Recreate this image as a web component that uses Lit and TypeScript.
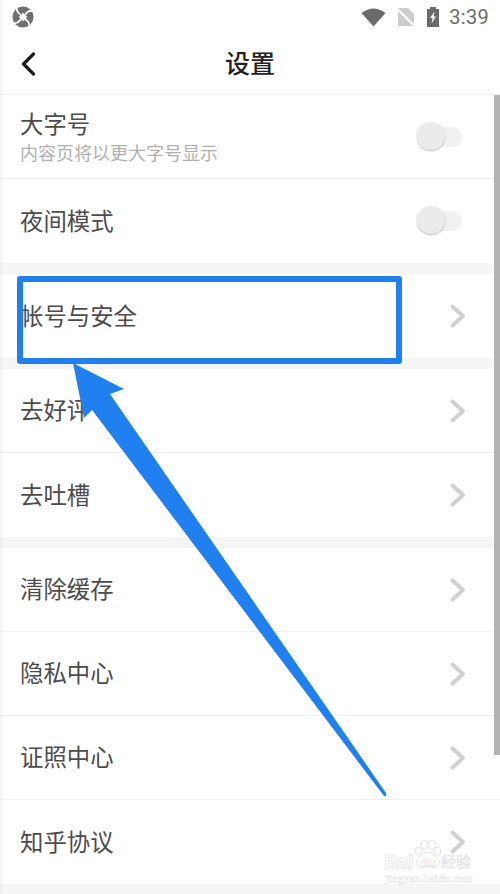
import { LitElement, html, css, svg } from 'lit';
import { customElement } from 'lit/decorators.js';

const chevron = html`<svg class="chev" width="16" height="24" viewBox="0 0 16 24">
  <path d="M2.5 2.5 L13 12 L2.5 21.5" fill="none" stroke="#d0d0d0" stroke-width="3.8" stroke-linecap="round" stroke-linejoin="round"/>
</svg>`;

const toggle = html`<div class="toggle"><span class="track"></span><span class="knob"></span></div>`;

// sections of the settings list, grey gap between each
const groups = [
  [
    { title: '大字号', sub: '内容页将以更大字号显示', toggle: true },
    { title: '夜间模式', toggle: true },
  ],
  [{ title: '帐号与安全' }],
  [{ title: '去好评' }, { title: '去吐槽' }],
  [{ title: '清除缓存' }, { title: '隐私中心' }, { title: '证照中心' }, { title: '知乎协议' }],
];

@customElement('app-root')
export class AppRoot extends LitElement {
  static styles = css`
    :host {
      display: block;
      position: relative;
      width: 500px;
      height: 894px;
      overflow: hidden;
      background: #f5f5f5;
      font-family: Roboto, "Noto Sans CJK SC", sans-serif;
    }
    .status {
      height: 34px;
      padding: 0 11px 0 12px;
      display: flex;
      align-items: center;
      background: #fff;
    }
    .status .spacer { flex: 1; }
    .status .icons { display: flex; align-items: center; }
    .wifi { margin-right: 10px; }
    .sim { margin-right: 10px; }
    .clock {
      font-size: 20px;
      color: #6b6b6b;
      margin-left: 9px;
      letter-spacing: 0.3px;
    }
    .bar {
      height: 60px;
      position: relative;
      display: flex;
      align-items: center;
      justify-content: center;
      background: #fff;
      border-bottom: 1px solid #f0f0f0;
    }
    .bar .back { position: absolute; left: 20px; top: 18px; }
    .bar h1 {
      margin: 0 0 4px;
      font-size: 25px;
      font-weight: 500;
      color: #222;
      font-family: "Noto Sans CJK SC", sans-serif;
    }
    .group {
      background: #fff;
      margin-bottom: 11px;
    }
    .row {
      height: 83px;
      padding: 0 37px 0 20px;
      display: flex;
      align-items: center;
      justify-content: space-between;
      border-bottom: 1px solid #efefef;
    }
    .row:last-child { border-bottom: none; height: 84px; }
    .text { margin-bottom: 3px; }
    .title {
      font-size: 23.4px;
      line-height: 32px;
      color: #4c4c4c;
      font-family: "Noto Sans CJK SC", sans-serif;
    }
    .sub {
      margin-top: 2px;
      font-size: 18px;
      line-height: 22px;
      color: #b0b0b0;
      font-family: "Noto Sans CJK SC", sans-serif;
    }
    .toggle {
      position: relative;
      width: 46px;
      height: 30px;
    }
    .track {
      position: absolute;
      left: 8px;
      top: 5px;
      width: 37px;
      height: 20px;
      border-radius: 10px;
      background: #f1f1f1;
    }
    .knob {
      position: absolute;
      left: 0;
      top: 0;
      width: 28px;
      height: 28px;
      border-radius: 50%;
      background: #ebebeb;
      box-shadow: 0 1px 2px rgba(0, 0, 0, 0.25);
    }
    .chev { margin-right: -3px; }
    .scrollbar {
      position: absolute;
      right: 0;
      top: 95px;
      width: 6px;
      height: 660px;
      background: #b4b4b4;
    }
    .edge {
      position: absolute;
      left: 0;
      top: 0;
      width: 4px;
      height: 100%;
      background: linear-gradient(to right, rgba(0, 0, 0, 0.04), transparent);
    }
    .callout {
      position: absolute;
      left: 17px;
      top: 276px;
      width: 385px;
      height: 88px;
      box-sizing: border-box;
      border: 6px solid #2080ef;
      border-radius: 3px;
    }
    .arrow { position: absolute; left: 0; top: 0; }
    .mark {
      position: absolute;
      left: 384px;
      top: 838px;
      width: 116px;
      height: 46px;
      color: #fff;
      font-family: "Liberation Sans", "Noto Sans CJK SC", sans-serif;
      -webkit-text-stroke: 0.6px #dedede;
    }
    .mark svg { position: absolute; left: 29px; top: 0; }
    .mark span, .mark div { position: absolute; white-space: nowrap; }
    .bai { left: 0; top: 14px; font-size: 20px; line-height: 20px; letter-spacing: -0.8px; font-weight: 700; }
    .du { left: 36px; top: 18px; font-size: 13px; line-height: 14px; font-weight: 700; }
    .cn { left: 57px; top: 15px; font-size: 15px; line-height: 18px; }
    .url {
      left: 1px;
      top: 34px;
      font-size: 11px;
      line-height: 12px;
      font-weight: 700;
      font-family: "Liberation Serif", serif;
      -webkit-text-stroke: 0.4px #dedede;
    }
  `;

  render() {
    return html`
      <div class="status">
        <svg width="22" height="22" viewBox="0 0 22 22">
          <circle cx="11" cy="11" r="10.5" fill="#6f6f6f"/>
          <g fill="none" stroke="#fff" stroke-width="1.8" stroke-linecap="round">
            <path d="M8.5 8.5 Q5 7 4.5 1.5"/>
            <path d="M13.5 8.5 Q15 5 20.5 4.5"/>
            <path d="M13.5 13.5 Q17 15 17.5 20.5"/>
            <path d="M8.5 13.5 Q7 17 1.5 17.5"/>
          </g>
          <rect x="8" y="8" width="6" height="6" transform="rotate(45 11 11)" fill="#fff"/>
        </svg>
        <span class="spacer"></span>
        <div class="icons">
          <svg class="wifi" width="25" height="20" viewBox="0 0 25 20">
            <path d="M0.5 6 Q12.5 -3 24.5 6 L12.5 19.5Z" fill="#6b6b6b"/>
          </svg>
          <svg class="sim" width="20" height="20" viewBox="0 0 20 20">
            <path d="M2 1 H12 L18 7 V19 H2Z" fill="#cdcdcd"/>
            <path d="M0.5 1 L19.5 20" stroke="#fff" stroke-width="2"/>
          </svg>
          <svg width="14" height="20" viewBox="0 0 14 20">
            <path d="M4 0 H10 V2 H13 V20 H1 V2 H4Z" fill="#6b6b6b"/>
            <path d="M8.5 4.5 L4 11 H6.5 L5.5 16.5 L10 9.5 H7.5Z" fill="#fff"/>
          </svg>
          <span class="clock">3:39</span>
        </div>
      </div>
      <div class="bar">
        <svg class="back" width="18" height="24" viewBox="0 0 18 24">
          <path d="M13.5 2 L3.5 12 L13.5 22" fill="none" stroke="#1c1c1c" stroke-width="3.2" stroke-linecap="round" stroke-linejoin="round"/>
        </svg>
        <h1>设置</h1>
      </div>
      ${groups.map(
        items => html`
          <div class="group">
            ${items.map(
              item => html`
                <div class="row">
                  <div class="text">
                    <div class="title">${item.title}</div>
                    ${item.sub ? html`<div class="sub">${item.sub}</div>` : ''}
                  </div>
                  ${item.toggle ? toggle : chevron}
                </div>
              `,
            )}
          </div>
        `,
      )}
      <div class="scrollbar"></div>
      <div class="edge"></div>
      <div class="callout"></div>
      <svg class="arrow" width="500" height="894" viewBox="0 0 500 894">
        ${svg`<path d="M73 363 L124 389 L110 394 L386 793 Q387 797 384 796 L92 410 L84 418Z" fill="#2080ef"/>`}
      </svg>
      <div class="mark">
        <svg width="30" height="32" viewBox="0 0 32 32">
          <g fill="#fff" stroke="#dedede" stroke-width="1">
            <ellipse cx="6" cy="13" rx="3.4" ry="4.4"/>
            <ellipse cx="12.5" cy="6" rx="3.6" ry="4.6"/>
            <ellipse cx="20.5" cy="6" rx="3.6" ry="4.6"/>
            <ellipse cx="26" cy="13" rx="3.4" ry="4.4"/>
            <path d="M16 14 C21 14 25 20 28 23 C30 28 25 31 21 30 C18 29 14 29 11 30 C7 31 3 28 4 23 C7 20 11 14 16 14Z"/>
          </g>
        </svg>
        <span class="bai">Bai</span>
        <span class="du">du</span>
        <span class="cn">经验</span>
        <div class="url">jingyan.baidu.com</div>
      </div>
    `;
  }
}
